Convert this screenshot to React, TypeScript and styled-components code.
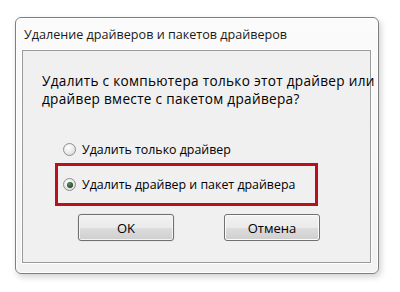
import React from "react";
import styled, { createGlobalStyle } from "styled-components";

const Global = createGlobalStyle`
  html, body { margin: 0; padding: 0; background: #ffffff; }
  body { font-family: "Segoe UI", "Open Sans", "Noto Sans", sans-serif; }
`;

const Page = styled.div`
  width: 400px;
  height: 292px;
  padding: 17px 0 0 15px;
  box-sizing: border-box;
`;

const Window = styled.div`
  width: 364px;
  height: 257px;
  box-sizing: border-box;
  border: 1px solid #7e7e7e;
  border-radius: 6px;
  background: linear-gradient(#fbfbfb, #f2f2f2);
  box-shadow: 2px 3px 6px rgba(0, 0, 0, 0.18), inset 0 0 0 1px #ffffff;
  display: flex;
  flex-direction: column;
  padding: 0 7px 10px 6px;
`;

const Title = styled.div`
  height: 32px;
  display: flex;
  align-items: center;
  padding-left: 2px;
  font-size: 12.6px;
  color: #1a1a1a;
`;

const Client = styled.div`
  flex: 1;
  box-sizing: border-box;
  border: 1px solid #9a9a9a;
  background: #f0f0f0;
  box-shadow: 0 0 0 1px #ffffff;
  padding: 21px 0 0 19px;
  display: flex;
  flex-direction: column;
`;

const Message = styled.div`
  font-size: 13.6px;
  line-height: 18px;
  letter-spacing: 0.3px;
  color: #000;
  width: 345px;
`;

const Options = styled.div`
  margin-top: 33px;
  padding-left: 21px;
  display: flex;
  flex-direction: column;
  gap: 5px;
`;

const OptionRow = styled.label<{ $highlight?: boolean }>`
  display: flex;
  align-items: center;
  gap: 6px;
  font-size: 12.4px;
  color: #000;
  box-sizing: border-box;
  height: ${(p) => (p.$highlight ? "43px" : "17px")};
  width: ${(p) => (p.$highlight ? "263px" : "auto")};
  margin-left: ${(p) => (p.$highlight ? "-8px" : "0")};
  padding-left: ${(p) => (p.$highlight ? "5px" : "0")};
  border: ${(p) => (p.$highlight ? "3px solid #b8111d" : "none")};
`;

const Radio = styled.span<{ $checked?: boolean }>`
  width: 13px;
  height: 13px;
  box-sizing: border-box;
  border-radius: 50%;
  border: 1px solid #8e8f8f;
  background: radial-gradient(circle at 40% 35%, #ffffff 0%, #e6e6e6 60%, #cfcfcf 100%);
  display: flex;
  align-items: center;
  justify-content: center;
  flex: none;
  &::after {
    content: "";
    display: ${(p) => (p.$checked ? "block" : "none")};
    width: 6px;
    height: 6px;
    border-radius: 50%;
    background: radial-gradient(circle at 40% 35%, #5f8f5a, #142a18);
  }
`;

const Buttons = styled.div`
  margin-top: 8px;
  padding-left: 36px;
  display: flex;
  gap: 50px;
`;

const Button = styled.button<{ $default?: boolean }>`
  width: 96px;
  height: 27px;
  box-sizing: border-box;
  border: 1px solid #707070;
  border-radius: 3px;
  background: linear-gradient(#f2f2f2 0%, #ebebeb 50%, #dddddd 51%, #cfcfcf 100%);
  box-shadow: inset 0 0 0 1px ${(p) => (p.$default ? "#f4f4f4" : "#fcfcfc")}
    ${(p) => (p.$default ? ", 0 0 0 1px #e8e8e8" : "")};
  font-family: "Segoe UI", "Open Sans", "Noto Sans", sans-serif;
  font-size: 13px;
  color: #000;
  padding: 0;
`;

export default function App() {
  return (
    <Page>
      <Global />
      <Window>
        <Title>Удаление драйверов и пакетов драйверов</Title>
        <Client>
          <Message>
            Удалить с компьютера только этот драйвер или драйвер вместе с
            пакетом драйвера?
          </Message>
          <Options>
            <OptionRow>
              <Radio />
              Удалить только драйвер
            </OptionRow>
            <OptionRow $highlight>
              <Radio $checked />
              Удалить драйвер и пакет драйвера
            </OptionRow>
          </Options>
          <Buttons>
            <Button $default>OK</Button>
            <Button>Отмена</Button>
          </Buttons>
        </Client>
      </Window>
    </Page>
  );
}
